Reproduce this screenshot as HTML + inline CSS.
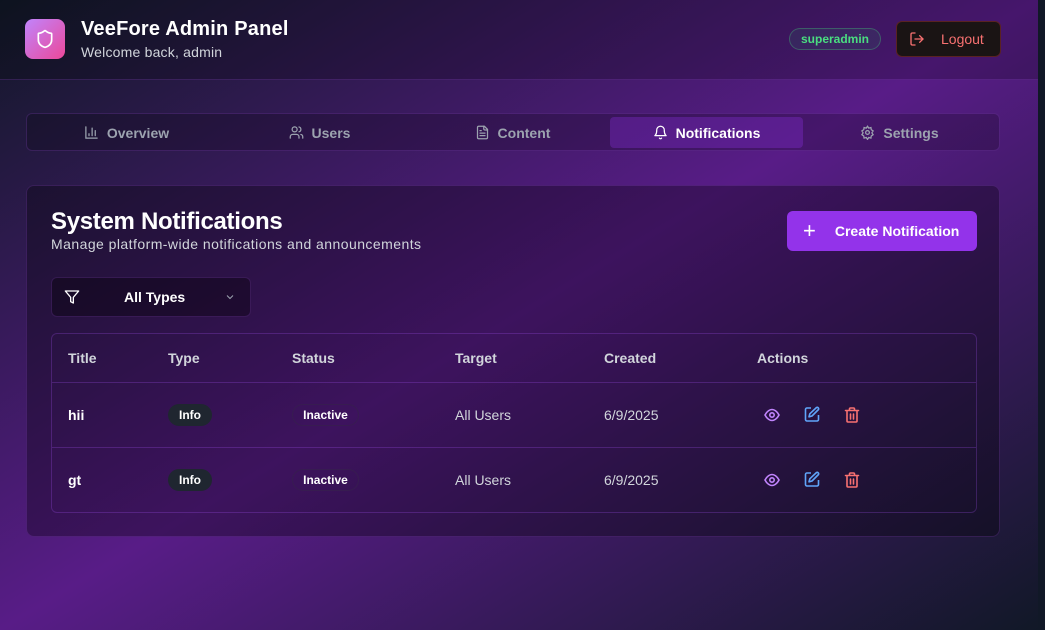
<!DOCTYPE html>
<html><head><meta charset="utf-8"><style>
*{box-sizing:border-box;margin:0;padding:0}
body{width:1045px;height:630px;overflow:hidden;font-family:"Liberation Sans",sans-serif;background:#111827;position:relative;color:#fff}
.bg{position:absolute;left:0;top:0;width:1038px;height:630px;background:linear-gradient(to bottom right,#111827 0%,#581c87 50%,#111827 100%)}
.hdr{position:absolute;left:0;top:0;width:1038px;height:80px;background:rgba(0,0,0,0.2);border-bottom:1px solid rgba(168,85,247,0.2)}
.logo{position:absolute;left:25px;top:19px;width:40px;height:40px;border-radius:8px;background:linear-gradient(135deg,#c084fc,#ec4899);display:flex;align-items:center;justify-content:center}
.t1{position:absolute;left:81px;top:18px;font-size:20px;font-weight:bold;letter-spacing:0.2px}
.t2{position:absolute;left:81px;top:44px;font-size:14px;color:#d1d5db;letter-spacing:0.2px}
.badge{position:absolute;left:789px;top:28px;width:92px;height:22px;border-radius:11px;border:1px solid rgba(74,222,128,0.3);background:rgba(34,197,94,0.1);color:#4ade80;font-size:12px;font-weight:bold;text-align:center;line-height:20px}
.logout{position:absolute;left:896px;top:21px;width:105px;height:36px;border-radius:6px;background:#1a1414;border:1px solid rgba(239,68,68,0.3);color:#f87171;font-size:14px}
.tabs{position:absolute;left:26px;top:113px;width:974px;height:38px;border-radius:6px;background:rgba(0,0,0,0.2);border:1px solid rgba(168,85,247,0.2)}
.tab{position:absolute;top:3px;height:31px;width:193px;display:flex;align-items:center;justify-content:center;gap:8px;font-size:14px;color:#9ca3af;font-weight:bold;border-radius:4px}
.tab.on{background:rgba(147,51,234,0.3);color:#fff}
.card{position:absolute;left:26px;top:185px;width:974px;height:352px;border-radius:8px;background:rgba(0,0,0,0.3);border:1px solid rgba(168,85,247,0.2)}
h2{position:absolute;left:24px;top:22px;font-size:24px;letter-spacing:-0.3px}
.sub{position:absolute;left:24px;top:50px;font-size:14px;color:#d1d5db;letter-spacing:0.45px}
.create{position:absolute;left:760px;top:25px;width:190px;height:40px;border-radius:6px;background:#9333ea;font-size:14px;font-weight:bold;display:flex;align-items:center}
.sel{position:absolute;left:24px;top:91px;width:200px;height:40px;border-radius:6px;background:rgba(0,0,0,0.35);border:1px solid rgba(168,85,247,0.2);font-size:14px;font-weight:bold}
.tbl{position:absolute;left:24px;top:147px;width:926px;height:180px;border-radius:6px;border:1px solid rgba(168,85,247,0.25)}
.row{position:absolute;left:0;width:924px;border-bottom:1px solid rgba(168,85,247,0.25)}
.c{position:absolute;font-size:14px}
.th{color:#d1d5db;font-weight:bold}
.pill{position:absolute;height:22px;border-radius:11px;font-size:12px;font-weight:bold;text-align:center;line-height:22px}
</style></head><body>
<div class="bg"></div>
<div class="hdr">
 <div class="logo"><svg width="20" height="20" viewBox="0 0 24 24" fill="none" stroke="#fff" stroke-width="2" stroke-linecap="round" stroke-linejoin="round"><path d="M20 13c0 5-3.5 7.5-7.66 8.950a1 1 0 0 1-.67-.01C7.5 20.5 4 18 4 13V6a1 1 0 0 1 1-1c2 0 4.5-1.2 6.240-2.720a1.170 1.170 0 0 1 1.520 0C14.510 3.810 17 5 19 5a1 1 0 0 1 1 1z"/></svg></div>
 <div class="t1">VeeFore Admin Panel</div>
 <div class="t2">Welcome back, admin</div>
 <div class="badge">superadmin</div>
 <div class="logout"><svg style="position:absolute;left:12px;top:9px" width="16" height="16" viewBox="0 0 24 24" fill="none" stroke="#f87171" stroke-width="2" stroke-linecap="round" stroke-linejoin="round"><path d="M9 21H5a2 2 0 0 1-2-2V5a2 2 0 0 1 2-2h4"/><path d="M16 17l5-5-5-5"/><path d="M21 12H9"/></svg><span style="position:absolute;left:44px;top:9px">Logout</span></div>
</div>
<div class="tabs">
 <div class="tab" style="left:3px"><svg width="15" height="15" viewBox="0 0 24 24" fill="none" stroke="currentColor" stroke-width="2" stroke-linecap="round"><path d="M3 3v18h18"/><path d="M18 17V9M13 17V5M8 17v-3"/></svg>Overview</div>
 <div class="tab" style="left:196px"><svg width="15" height="15" viewBox="0 0 24 24" fill="none" stroke="currentColor" stroke-width="2" stroke-linecap="round"><path d="M16 21v-2a4 4 0 0 0-4-4H6a4 4 0 0 0-4 4v2"/><circle cx="9" cy="7" r="4"/><path d="M22 21v-2a4 4 0 0 0-3-3.870M16 3.130a4 4 0 0 1 0 7.750"/></svg>Users</div>
 <div class="tab" style="left:389px"><svg width="15" height="15" viewBox="0 0 24 24" fill="none" stroke="currentColor" stroke-width="2" stroke-linecap="round" stroke-linejoin="round"><path d="M15 2H6a2 2 0 0 0-2 2v16a2 2 0 0 0 2 2h12a2 2 0 0 0 2-2V7z"/><path d="M14 2v4a2 2 0 0 0 2 2h4M16 13H8M16 17H8M10 9H8"/></svg>Content</div>
 <div class="tab on" style="left:583px;width:193px"><svg width="15" height="15" viewBox="0 0 24 24" fill="none" stroke="currentColor" stroke-width="2" stroke-linecap="round" stroke-linejoin="round"><path d="M6 8a6 6 0 0 1 12 0c0 7 3 9 3 9H3s3-2 3-9"/><path d="M10.300 21a1.940 1.940 0 0 0 3.400 0"/></svg>Notifications</div>
 <div class="tab" style="left:776px"><svg width="15" height="15" viewBox="0 0 24 24" fill="none" stroke="currentColor" stroke-width="2"><circle cx="12" cy="12" r="3"/><path d="M12 2l2 3 3.500-1 .500 3.500 3 2-2 3 2 3-3 2-.500 3.500-3.500-1-2 3-2-3-3.500 1-.500-3.500-3-2 2-3-2-3 3-2 .500-3.500 3.500 1z"/></svg>Settings</div>
</div>
<div class="card">
 <h2>System Notifications</h2>
 <div class="sub">Manage platform-wide notifications and announcements</div>
 <div class="create"><span style="font-size:22px;font-weight:normal;margin-left:16px;margin-right:19px">+</span>Create Notification</div>
 <div class="sel"><svg style="position:absolute;left:12px;top:11px" width="16" height="16" viewBox="0 0 24 24" fill="none" stroke="#fff" stroke-width="2" stroke-linejoin="round"><path d="M22 3H2l8 9.460V19l4 2v-8.540z"/></svg><span style="position:absolute;left:72px;top:11px">All Types</span><svg style="position:absolute;left:172px;top:13px" width="12" height="12" viewBox="0 0 24 24" fill="none" stroke="#9ca3af" stroke-width="2"><path d="M6 9l6 6 6-6"/></svg></div>
 <div class="tbl">
  <div class="row" style="top:0;height:49px">
   <div class="c th" style="left:16px;top:16px">Title</div><div class="c th" style="left:116px;top:16px">Type</div><div class="c th" style="left:240px;top:16px">Status</div><div class="c th" style="left:403px;top:16px">Target</div><div class="c th" style="left:552px;top:16px">Created</div><div class="c th" style="left:705px;top:16px">Actions</div>
  </div>
  <div class="row" style="top:49px;height:65px">
   <div class="c" style="left:16px;top:24px;font-weight:bold">hii</div>
   <div class="pill" style="left:116px;top:21px;width:44px;background:#1f2630">Info</div>
   <div class="pill" style="left:240px;top:21px;width:67px;border:1px solid rgba(55,30,80,0.9);line-height:20px">Inactive</div>
   <div class="c" style="left:403px;top:24px;color:#d1d5db">All Users</div>
   <div class="c" style="left:552px;top:24px;color:#d1d5db">6/9/2025</div>
  </div>
  <div class="row" style="top:114px;height:65px;border-bottom:none">
   <div class="c" style="left:16px;top:24px;font-weight:bold">gt</div>
   <div class="pill" style="left:116px;top:21px;width:44px;background:#1f2630">Info</div>
   <div class="pill" style="left:240px;top:21px;width:67px;border:1px solid rgba(55,30,80,0.9);line-height:20px">Inactive</div>
   <div class="c" style="left:403px;top:24px;color:#d1d5db">All Users</div>
   <div class="c" style="left:552px;top:24px;color:#d1d5db">6/9/2025</div>
  </div>
 </div>
</div>
<svg style="position:absolute;left:0;top:0" width="1045" height="630">
 <defs>
  <g id="eye" fill="none" stroke="#c084fc" stroke-width="1.600"><path d="M1 7c2-4 5-5.500 7-5.500S13 3 15 7c-2 4-5 5.500-7 5.500S3 11 1 7z"/><circle cx="8" cy="7" r="2.200"/></g>
  <g id="ed" fill="none" stroke="#60a5fa" stroke-width="1.600" stroke-linejoin="round"><path d="M7 2H3a1.500 1.500 0 0 0-1.500 1.500v10A1.500 1.500 0 0 0 3 15h10a1.500 1.500 0 0 0 1.500-1.500V9"/><path d="M12.500 1.500a1.500 1.500 0 0 1 2 2L8 10l-3 .800.800-3z"/></g>
  <g id="tr" fill="none" stroke="#f87171" stroke-width="1.600" stroke-linecap="round"><path d="M1.500 3.500h13M3 3.500V14a1 1 0 0 0 1 1h8a1 1 0 0 0 1-1V3.500M5.500 3.500V2a1 1 0 0 1 1-1h3a1 1 0 0 1 1 1v1.500M6.500 7v5M9.500 7v5"/></g>
 </defs>
 <use href="#eye" x="764" y="408"/><use href="#ed" x="804" y="406"/><use href="#tr" x="844" y="407"/>
 <use href="#eye" x="764" y="473"/><use href="#ed" x="804" y="471"/><use href="#tr" x="844" y="472"/>
</svg>
</body></html>
